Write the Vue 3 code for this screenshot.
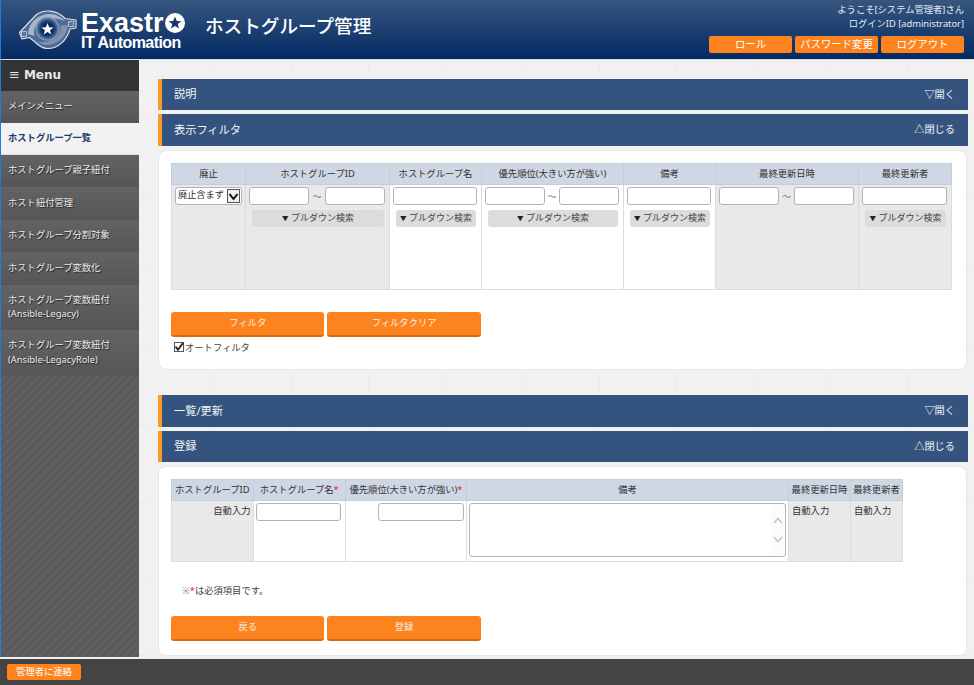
<script setup>
const menu = [
  { label: 'メインメニュー', h: 32 },
  { label: 'ホストグループ一覧', h: 32, active: true },
  { label: 'ホストグループ親子紐付', h: 32 },
  { label: 'ホスト紐付管理', h: 33 },
  { label: 'ホストグループ分割対象', h: 32 },
  { label: 'ホストグループ変数化', h: 33 },
  { label: 'ホストグループ変数紐付', sub: '(Ansible-Legacy)', h: 45 },
  { label: 'ホストグループ変数紐付', sub: '(Ansible-LegacyRole)', h: 46 }
]

// フィルタ表の列定義
const filterCols = [
  { title: '廃止', w: 74, type: 'select', gray: true },
  { title: 'ホストグループID', w: 144, type: 'range', pull: true, gray: true },
  { title: 'ホストグループ名', w: 92, type: 'text', pull: true },
  { title: '優先順位(大きい方が強い)', w: 142, type: 'range', pull: true },
  { title: '備考', w: 92, type: 'text', pull: true },
  { title: '最終更新日時', w: 143, type: 'range', gray: true },
  { title: '最終更新者', w: 93, type: 'text', pull: true, gray: true }
]

const regCols = [81.5, 92.5, 121, 322, 62, 52]
</script>

<template>
  <div class="page">
    <header class="top">
      <div class="logo">
        <svg class="logo-mark" width="62" height="44" viewBox="17 5 62 44">
          <defs>
            <radialGradient id="eye" cx="50%" cy="50%" r="50%">
              <stop offset="0.45" stop-color="#08285e" />
              <stop offset="0.72" stop-color="#2f5288" />
              <stop offset="1" stop-color="#93a5c0" />
            </radialGradient>
          </defs>
          <path d="M19.5 29.5 L36 12 C43 6.5 56 6 65 15.5 L76 17 L76 25 L70 26 C67 37 58 46 47 45.5 C42 45.3 38 42 35 39 L29.5 34.5 L22 36 Z" fill="#4f6b94" stroke="#dde3ec" stroke-width="1.1" stroke-linejoin="round" />
          <path d="M28 31 C29 18 40 10.5 51 11 C57 11.5 62 14.5 65 18 C58 15 48 14.5 41 18 C35 21 33 27 34.5 33 Z" fill="#a7b5c9" />
          <path d="M68 22 C67 33 58 41.5 47 42 C43 42 40 40.5 37.5 38.5 C45 40.5 54 38 58.5 32 C60.5 29 61 25 60.5 22.5 Z" fill="#7f93b1" />
          <circle cx="47.5" cy="25.8" r="12" fill="url(#eye)" />
          <path d="M47.5 20 L49.1 24.2 L53.6 24.4 L50.1 27.2 L51.3 31.6 L47.5 29.1 L43.7 31.6 L44.9 27.2 L41.4 24.4 L45.9 24.2 Z" fill="#fff" />
          <rect x="21.5" y="28.5" width="5" height="5" fill="#5d7599" stroke="#fff" stroke-width="0.9" stroke-dasharray="1.2 0.8" />
          <rect x="68.5" y="18.5" width="5" height="5" fill="#5d7599" stroke="#fff" stroke-width="0.9" stroke-dasharray="1.2 0.8" />
        </svg>
        <div class="logo-text">
          <div class="logo-name">
            Exastr<svg width="20" height="20" viewBox="0 0 20 20" class="logo-o">
              <circle cx="10" cy="10" r="10" fill="#fff" />
              <path d="M10 3.6 L11.8 8 L16.4 8.2 L12.8 11.1 L14 15.6 L10 13.1 L6 15.6 L7.2 11.1 L3.6 8.2 L8.2 8 Z" fill="#17396d" />
            </svg>
          </div>
          <div class="logo-sub">IT Automation</div>
        </div>
      </div>
      <h1 class="title">ホストグループ管理</h1>
      <div class="user">
        <div>ようこそ[システム管理者]さん</div>
        <div>ログインID [administrator]</div>
        <div class="user-btns">
          <button class="top-btn">ロール</button>
          <button class="top-btn">パスワード変更</button>
          <button class="top-btn">ログアウト</button>
        </div>
      </div>
    </header>

    <div class="middle">
      <nav class="side">
        <div class="side-head"><span class="burger">≡</span> Menu</div>
        <a
          v-for="m in menu"
          :key="m.label + m.sub"
          class="side-item"
          :class="{ active: m.active }"
          :style="{ height: m.h + 'px' }"
        >
          <span>{{ m.label }}</span>
          <span v-if="m.sub">{{ m.sub }}</span>
        </a>
      </nav>

      <main class="content">
        <div class="bar"><span>説明</span><span class="bar-act">▽開く</span></div>
        <div class="bar second"><span>表示フィルタ</span><span class="bar-act">△閉じる</span></div>
        <section class="panel filter-panel">
          <table class="grid">
            <colgroup>
              <col v-for="c in filterCols" :key="c.title" :style="{ width: c.w + 'px' }" />
            </colgroup>
            <thead>
              <tr><th v-for="c in filterCols" :key="c.title">{{ c.title }}</th></tr>
            </thead>
            <tbody>
              <tr class="filter-row">
                <td v-for="c in filterCols" :key="c.title" :class="{ gray: c.gray }">
                  <div v-if="c.type === 'select'" class="sel">
                    <span>廃止含まず</span>
                    <span class="sel-arrow">
                      <svg width="11" height="11" viewBox="0 0 11 11"><path d="M1.5 3 L5.5 8 L9.5 3" fill="none" stroke="#111" stroke-width="2" /></svg>
                    </span>
                  </div>
                  <div v-else-if="c.type === 'range'" class="range">
                    <input class="ipt" /><span class="tilde">～</span><input class="ipt" />
                  </div>
                  <input v-else class="ipt wide" />
                  <div v-if="c.pull" class="pull"><span class="pull-mark">▼</span> プルダウン検索</div>
                </td>
              </tr>
            </tbody>
          </table>
          <div class="btns filter-btns">
            <button class="act-btn">フィルタ</button>
            <button class="act-btn">フィルタクリア</button>
          </div>
          <label class="auto">
            <span class="check">
              <svg width="10" height="10" viewBox="0 0 10 10"><path d="M1.5 4.5 L4 7.8 L9 1" fill="none" stroke="#222" stroke-width="1.8" /></svg>
            </span>オートフィルタ
          </label>
        </section>

        <div class="bar list-bar"><span>一覧/更新</span><span class="bar-act">▽開く</span></div>
        <div class="bar reg-bar"><span>登録</span><span class="bar-act">△閉じる</span></div>
        <section class="panel reg-panel">
          <table class="grid reg">
            <colgroup>
              <col v-for="w in regCols" :key="w" :style="{ width: w + 'px' }" />
            </colgroup>
            <thead>
              <tr>
                <th>ホストグループID</th>
                <th>ホストグループ名<em>*</em></th>
                <th>優先順位(大きい方が強い)<em>*</em></th>
                <th>備考</th>
                <th>最終更新日時</th>
                <th>最終更新者</th>
              </tr>
            </thead>
            <tbody>
              <tr class="reg-row">
                <td class="gray auto-r">自動入力</td>
                <td class="name"><input class="ipt wide" /></td>
                <td class="tight"><input class="ipt prio" /></td>
                <td class="tight">
                  <div class="area-wrap">
                    <textarea class="area"></textarea>
                    <span class="scroll">
                      <svg width="10" height="7" viewBox="0 0 10 7"><path d="M1 6 L5 1.5 L9 6" fill="none" stroke="#c4c4c4" stroke-width="1.6" /></svg>
                      <svg width="10" height="7" viewBox="0 0 10 7"><path d="M1 1 L5 5.5 L9 1" fill="none" stroke="#c4c4c4" stroke-width="1.6" /></svg>
                    </span>
                  </div>
                </td>
                <td class="gray auto-l">自動入力</td>
                <td class="gray auto-l">自動入力</td>
              </tr>
            </tbody>
          </table>
          <p class="note"><span class="note-mark">※</span><em>*</em>は必須項目です。</p>
          <div class="btns">
            <button class="act-btn">戻る</button>
            <button class="act-btn">登録</button>
          </div>
        </section>
      </main>
    </div>

    <footer class="foot">
      <button class="contact">管理者に連絡</button>
    </footer>
  </div>
</template>

<style scoped>
.page {
  width: 974px;
  height: 685px;
  display: flex;
  flex-direction: column;
  overflow: hidden;
  font-family: "Noto Sans", "Noto Sans CJK JP", sans-serif;
  font-size: 9.3px;
  color: #333;
}

/* header */
.top {
  height: 60px;
  flex: none;
  display: flex;
  align-items: center;
  box-sizing: border-box;
  border-left: 1px solid #1c7ed6;
  border-bottom: 1px solid #d5dbe4;
  background: linear-gradient(#36567f, #042a63);
  color: #fff;
}
.logo {
  display: flex;
  align-items: center;
  width: 204px;
  flex: none;
  padding-left: 16px;
  box-sizing: border-box;
}
.logo-mark {
  flex: none;
  margin-right: 2px;
}
.logo-text {
  font-family: "Liberation Sans", sans-serif;
  font-weight: 700;
  margin-top: 1px;
}
.logo-name {
  display: flex;
  align-items: center;
  font-size: 27px;
  line-height: 24px;
  height: 24px;
}
.logo-o {
  margin-left: 1px;
}
.logo-sub {
  font-size: 16px;
  line-height: 14px;
  letter-spacing: -0.55px;
  margin-top: 1px;
  white-space: nowrap;
}
.title {
  margin: 0 0 10px;
  font-size: 18.6px;
  font-weight: 500;
  white-space: nowrap;
}
.user {
  margin-left: auto;
  align-self: flex-start;
  padding: 3px 10px 0 0;
  text-align: right;
  font-size: 9.3px;
  line-height: 14px;
  color: #e6ebf2;
}
.user-btns {
  display: flex;
  gap: 3px;
  margin-top: 5px;
}
.top-btn {
  width: 83px;
  height: 17px;
  padding: 0 0 1px;
  border: none;
  border-radius: 2px;
  background: #fd831e;
  color: #fff;
  font: inherit;
  font-size: 10.4px;
  line-height: 15px;
}

/* side menu */
.middle {
  flex: 1;
  display: flex;
  min-height: 0;
}
.side {
  width: 139px;
  flex: none;
  box-sizing: border-box;
  border-left: 1px solid #1c7ed6;
  display: flex;
  flex-direction: column;
  background: repeating-linear-gradient(135deg, #5a5a5a 0 3px, #5f5f5f 3px 6px);
}
.side-head {
  height: 31px;
  flex: none;
  box-sizing: border-box;
  padding: 0 0 2px 8px;
  display: flex;
  align-items: center;
  gap: 4px;
  background: #343434;
  color: #e8e8e8;
  font-family: "DejaVu Sans", sans-serif;
  font-weight: 700;
  font-size: 12px;
}
.burger {
  font-weight: 400;
  font-size: 13px;
}
.side-item {
  flex: none;
  box-sizing: border-box;
  padding: 0 0 1px 7px;
  display: flex;
  flex-direction: column;
  justify-content: center;
  line-height: 14.5px;
  color: #ececec;
  text-shadow: 1px 1px 1px #222;
  background: linear-gradient(#636363, #565656);
  white-space: nowrap;
}
.side-item.active {
  padding-bottom: 0;
  background: #f2f2f2;
  color: #17396d;
  font-weight: 700;
  text-shadow: none;
  border-bottom: 1px solid #ddd;
}

/* content */
.content {
  flex: 1;
  min-width: 0;
  box-sizing: border-box;
  padding: 19px 6px 0 19px;
  background-color: #f1f1f1;
  background-image:
    linear-gradient(90deg, #ececec 1px, transparent 1px),
    linear-gradient(#ececec 1px, transparent 1px);
  background-size: 77px 77px;
  background-position: -2px 56px;
}
.bar {
  height: 31px;
  box-sizing: border-box;
  display: flex;
  align-items: center;
  justify-content: space-between;
  padding: 0 13px 3px 12px;
  border-left: 4px solid #fb9a28;
  background: #34547f;
  color: #f2f4f7;
  font-size: 11.2px;
}
.bar-act {
  font-size: 10.2px;
}
.second {
  height: 32px;
  margin-top: 4px;
}
.list-bar {
  height: 32px;
  margin-top: 25px;
}
.reg-bar {
  margin-top: 4px;
}
.panel {
  margin: 4px 1px 0 0;
  box-sizing: border-box;
  background: #fff;
  border-radius: 8px;
  border: 1px solid #e6e6e6;
  padding: 12px 12px 0;
}
.filter-panel {
  height: 220px;
}
.reg-panel {
  height: 190px;
}

/* tables */
.grid {
  table-layout: fixed;
  width: 780px;
  border-collapse: collapse;
  border: 1px solid #d8d8d8;
}
.grid.reg {
  width: 731px;
}
.grid th {
  height: 21px;
  padding: 0 0 3px;
  box-sizing: border-box;
  background: #ced7e3;
  border: 1px solid #c4cedb;
  font-weight: 400;
  text-align: center;
  white-space: nowrap;
}
.grid th em,
.note em {
  color: #e02020;
  font-style: normal;
}
.grid td {
  padding: 2px 4px 0 3px;
  vertical-align: top;
  border: 1px solid #dcdcdc;
  box-sizing: border-box;
}
.grid td.tight {
  padding: 2px 2px 0;
}
.grid td.name {
  padding: 2px 4px 0 2px;
}
.gray {
  background: #e9e9e9;
}
.filter-row {
  height: 105px;
}
.reg-row {
  height: 61px;
}
.ipt {
  height: 18px;
  box-sizing: border-box;
  width: 60px;
  min-width: 0;
  padding: 0 2px;
  border: 1px solid #b3b3b3;
  border-radius: 3px;
  background: #fff;
  display: block;
}
.ipt.wide {
  width: 100%;
}
.ipt.prio {
  width: 86px;
  margin-left: auto;
}
.range {
  display: flex;
  align-items: center;
  justify-content: space-between;
}
.tilde {
  color: #777;
  font-size: 9px;
}
.pull {
  margin: 5px 1px 0 3px;
  height: 17px;
  line-height: 15px;
  border-radius: 3px;
  background: #dcdcdc;
  text-align: center;
  color: #444;
  font-size: 9px;
  white-space: nowrap;
}
.pull-mark {
  font-size: 6.5px;
  color: #222;
}
.sel {
  position: relative;
  height: 18px;
  box-sizing: border-box;
  width: 67px;
  border: 1px solid #b3b3b3;
  border-radius: 3px;
  background: #fff;
  line-height: 14px;
  padding-left: 2px;
  white-space: nowrap;
  font-size: 9.2px;
}
.sel-arrow {
  position: absolute;
  right: 1px;
  top: 1px;
  width: 13px;
  height: 14px;
  box-sizing: border-box;
  border: 1px solid #555;
  display: flex;
  align-items: center;
  justify-content: center;
  background: #efefef;
}
.auto-r {
  text-align: right;
}
.grid td.auto-r {
  padding-right: 2px;
  padding-top: 2px;
}
.grid td.auto-l {
  padding-left: 3px;
  padding-top: 2px;
}
.area-wrap {
  position: relative;
  height: 54px;
}
.area {
  display: block;
  width: 100%;
  height: 54px;
  box-sizing: border-box;
  resize: none;
  border: 1px solid #b3b3b3;
  border-radius: 3px;
  margin: 0;
  padding: 0;
  background: #fff;
}
.scroll {
  position: absolute;
  right: 2px;
  top: 2px;
  bottom: 2px;
  width: 13px;
  display: flex;
  flex-direction: column;
  align-items: center;
  justify-content: center;
  gap: 12px;
  background: #fbfbfb;
}
.btns {
  display: flex;
  gap: 3px;
}
.filter-btns {
  margin-top: 22px;
}
.act-btn {
  width: 153.4px;
  height: 25px;
  padding: 0 0 3px;
  border: none;
  border-bottom: 2px solid #d56c12;
  border-radius: 3px;
  background: #fd831e;
  color: #f6f0e8;
  font: inherit;
  font-size: 9.3px;
}
.auto {
  display: flex;
  align-items: center;
  margin: 3px 0 0 3px;
  font-size: 9.3px;
  color: #444;
}
.check {
  width: 10px;
  height: 10px;
  box-sizing: border-box;
  border: 1px solid #555;
  display: flex;
  align-items: center;
  justify-content: center;
  margin-right: 1px;
  background: #fff;
}
.check svg {
  flex: none;
}
.note {
  margin: 22px 0 19px 11px;
  line-height: 13px;
  color: #444;
}
.note-mark {
  color: #888;
}

/* footer */
.foot {
  height: 28px;
  flex: none;
  background: #444;
  border-top: 2px solid #f1f1f1;
  box-sizing: border-box;
  display: flex;
  align-items: center;
  padding-left: 7px;
}
.contact {
  width: 74px;
  height: 16px;
  padding: 0 0 2px;
  border: none;
  border-radius: 2px;
  background: #fd831e;
  color: #fff;
  font: inherit;
  font-size: 9.3px;
}
</style>
